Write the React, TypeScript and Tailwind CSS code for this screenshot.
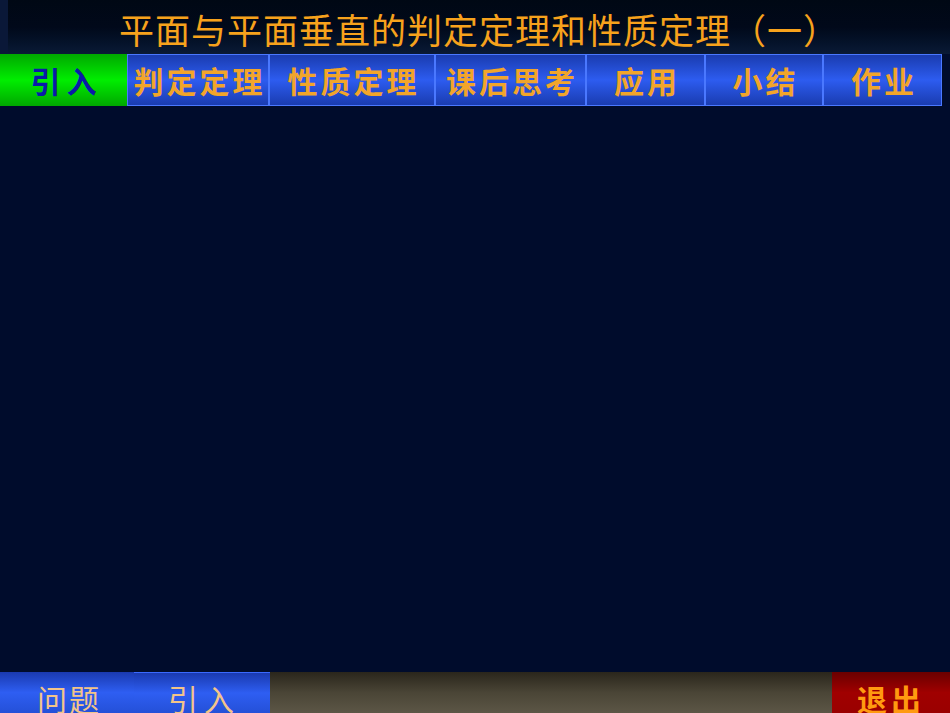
const navItems = [
  { label: "引入", width: "w-[127px]", active: true },
  { label: "判定定理", width: "w-[142px]" },
  { label: "性质定理", width: "w-[166px]" },
  { label: "课后思考", width: "w-[151px]" },
  { label: "应用", width: "w-[119px]" },
  { label: "小结", width: "w-[118px]" },
  { label: "作业", width: "w-[119px]" },
];

const cjk = { fontFamily: '"Noto Sans CJK SC", "Noto Sans", sans-serif' };

const App = () => {
  return (
    <div className="flex h-[713px] w-[950px] flex-col overflow-hidden bg-[#000c2c]" style={cjk}>
      <div className="flex h-[54px] shrink-0">
        <div className="w-[8px] bg-[#0a1838]" />
        <div className="flex flex-1 items-center justify-center bg-gradient-to-b from-[#000814] via-[#01091a] to-[#0a1a36]">
          <h1 className="pt-[2px] text-[35px] leading-none tracking-[1px] text-[#f7a21c]">
            平面与平面垂直的判定定理和性质定理（一）
          </h1>
        </div>
      </div>

      <div className="flex h-[52px] shrink-0">
        {navItems.map((item) =>
          item.active ? (
            <div
              key={item.label}
              className={`${item.width} flex items-center justify-center bg-gradient-to-b from-[#00a800] via-[#00ee00] to-[#00a800] pl-[6px] text-[30px] font-bold tracking-[6px] text-[#0a1aa8]`}
            >
              {item.label}
            </div>
          ) : (
            <div
              key={item.label}
              className={`${item.width} flex items-center justify-center border border-[#4a78ff] bg-gradient-to-b from-[#1a3cb0] via-[#2d5cf0] to-[#1a3cb0] pl-[3px] text-[30px] font-bold tracking-[3px] text-[#f2a52a]`}
            >
              {item.label}
            </div>
          )
        )}
      </div>

      <div className="flex-1" />

      <div className="flex h-[41px] shrink-0">
        <div className="flex w-[134px] items-end justify-center bg-gradient-to-b from-[#1a3ab0] via-[#2e5ef2] to-[#2450d8] pl-[4px] text-[30px] leading-[30px] tracking-[2px] text-[#f3c489]">
          问题
        </div>
        <div className="flex w-[136px] items-end justify-center border-t border-[#3a6aff] bg-gradient-to-b from-[#1a3ab0] via-[#2e5ef2] to-[#2450d8] pl-[4px] text-[30px] leading-[30px] tracking-[6px] text-[#f3c489]">
          引入
        </div>
        <div className="flex-1 bg-gradient-to-b from-[#2a261c] via-[#4a4536] to-[#5c5646]" />
        <div className="flex w-[118px] items-end justify-center bg-gradient-to-b from-[#6a0000] via-[#a00000] to-[#9a0000] text-[30px] font-bold leading-[30px] tracking-[4px] text-[#ff9a10]">
          退出
        </div>
      </div>
    </div>
  );
};

export default App;
